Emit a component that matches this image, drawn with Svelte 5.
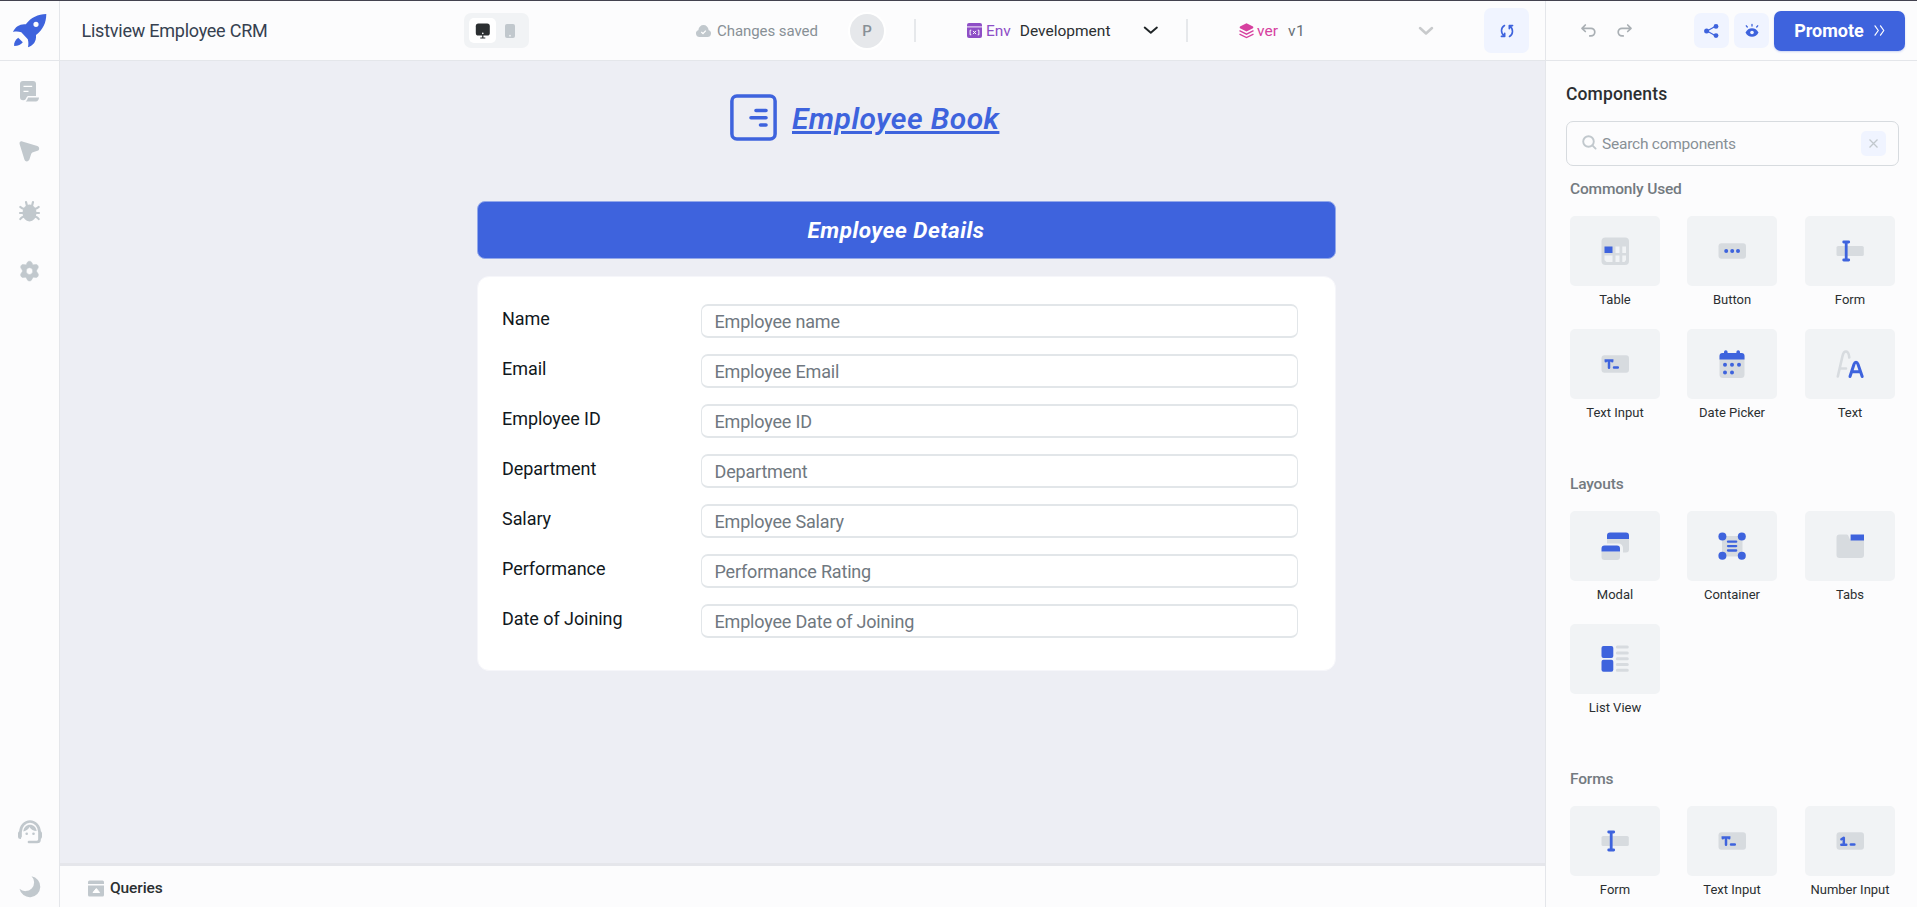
<script>
  const fields = [
    ['Name', 'Employee name'],
    ['Email', 'Employee Email'],
    ['Employee ID', 'Employee ID'],
    ['Department', 'Department'],
    ['Salary', 'Employee Salary'],
    ['Performance', 'Performance Rating'],
    ['Date of Joining', 'Employee Date of Joining']
  ];
  const sections = [
    { title: 'Commonly Used', items: [['Table', 'table'], ['Button', 'button'], ['Form', 'form'], ['Text Input', 'textinput'], ['Date Picker', 'date'], ['Text', 'text']] },
    { title: 'Layouts', items: [['Modal', 'modal'], ['Container', 'container'], ['Tabs', 'tabs'], ['List View', 'list']] },
    { title: 'Forms', items: [['Form', 'form'], ['Text Input', 'textinput'], ['Number Input', 'number']] }
  ];
</script>

{#snippet glyph(kind)}
  <svg width="28" height="28" viewBox="0 0 28 28" fill="none">
    {#if kind === 'table'}
      <rect x=".5" y=".5" width="27.5" height="27.5" rx="4" fill="#d7dbdf" />
      <rect x="3.5" y="9.5" width="8" height="6.5" fill="#3e63dd" />
      <path d="M14.5 9.5h4V16h-4zM21.3 9.5h3.7V16h-3.7zM3.5 18.5h8V25h-6l-2-2zM14.5 18.5h4V25h-4zM21.3 18.5h3.7V23l-1.500 2h-2.200z" fill="#f1f3f5" />
    {:else if kind === 'button'}
      <rect x=".5" y="6.2" width="27.5" height="15.5" rx="3" fill="#d7dbdf" />
      <g fill="#3e63dd"><circle cx="8.2" cy="14" r="2" /><circle cx="14.2" cy="14" r="2" /><circle cx="20" cy="14" r="2" /></g>
    {:else if kind === 'form'}
      <rect x=".5" y="9" width="27.3" height="10" rx="1.6" fill="#d7dbdf" />
      <path d="M7.7 5h5M7.7 23h5M10.2 5v18" stroke="#3e63dd" stroke-width="2.8" stroke-linecap="round" />
    {:else if kind === 'textinput'}
      <rect x=".5" y="5.2" width="27.5" height="17.6" rx="3" fill="#d7dbdf" />
      <path d="M4.8 11.3v-.7h6.400v.7M8 11v6.800M13 17.500h3.800" stroke="#3e63dd" stroke-width="2.500" stroke-linecap="round" />
    {:else if kind === 'number'}
      <rect x=".5" y="5.2" width="27.5" height="17.6" rx="3" fill="#d7dbdf" />
      <path d="M5.4 12.3l2.4-1.500v7M5.300 17.800h5M14.800 17.500h3.600" stroke="#3e63dd" stroke-width="2.500" stroke-linecap="round" stroke-linejoin="round" />
    {:else if kind === 'date'}
      <rect x="1.5" y="3" width="25" height="25" rx="3.5" fill="#d7dbdf" />
      <path d="M1.5 9.5V6a3 3 0 0 1 3-3H6V2a1.8 1.8 0 0 1 3.6 0v1h8.8V2A1.8 1.8 0 0 1 22 2v1h1.5a3 3 0 0 1 3 3v3.5z" fill="#3e63dd" />
      <g fill="#3e63dd"><circle cx="7" cy="14.8" r="2" /><circle cx="14" cy="14.8" r="2" /><circle cx="21" cy="14.8" r="2" /><circle cx="7" cy="22.6" r="2" /><circle cx="14" cy="22.6" r="2" /></g>
    {:else if kind === 'text'}
      <path d="M1.8 26.5L6.5 6C8-.2 12.5-.2 13.3 7.5M4.5 18.5h5.5" stroke="#d7dbdf" stroke-width="2.6" stroke-linecap="round" />
      <path d="M14 26.5l4-12.2c1-2.6 3-2.6 4 0l4.2 12.2M15.8 21.8h8.6" stroke="#3e63dd" stroke-width="3" stroke-linecap="round" />
    {:else if kind === 'modal'}
      <path d="M6 7h22v10.5a3 3 0 0 1-3 3h-3V16a4.5 4.5 0 0 0-4.500-4.500H6z" fill="#d7dbdf" />
      <path d="M6 7V3.500a3 3 0 0 1 3-3h16a3 3 0 0 1 3 3V7z" fill="#3e63dd" />
      <path d="M.5 19.500H19v5.500a3 3 0 0 1-3 3H3.500a3 3 0 0 1-3-3z" fill="#d7dbdf" />
      <path d="M.5 19.500V16.500a3 3 0 0 1 3-3H16a3 3 0 0 1 3 3v3z" fill="#3e63dd" />
    {:else if kind === 'container'}
      <rect x="4" y="4" width="20.500" height="20.500" rx="1" fill="#d7dbdf" />
      <g fill="#3e63dd"><circle cx="4.400" cy="4.500" r="4" /><circle cx="23.800" cy="4.500" r="4" /><circle cx="4.400" cy="23.800" r="4" /><circle cx="23.800" cy="23.800" r="4" /></g>
      <path d="M10 9.700h8.200M10 14.100h8.200M10 18.500h8.200" stroke="#3e63dd" stroke-width="2.300" stroke-linecap="round" />
    {:else if kind === 'tabs'}
      <path d="M.5 5.500a3 3 0 0 1 3-3h7.200c2.400 0 2.300 5.600 4.600 5.600H28V23a3 3 0 0 1-3 3H3.500a3 3 0 0 1-3-3z" fill="#d7dbdf" />
      <path d="M14.600 2.500H28v6H14.600z" fill="#3e63dd" />
    {:else if kind === 'list'}
      <rect x=".5" y="1" width="11.800" height="12" rx="2" fill="#3e63dd" />
      <rect x=".5" y="14.800" width="11.800" height="12" rx="2" fill="#3e63dd" />
      <path d="M16.300 2.100h10M16.300 8h10M16.300 13.800h10M16.300 19.500h10M16.300 25.300h10" stroke="#d7dbdf" stroke-width="3" stroke-linecap="round" />
    {/if}
  </svg>
{/snippet}

<div class="app">
  <header>
    <div class="logo">
      <svg width="34" height="34" viewBox="0 0 34 34" fill="#3e63dd">
        <path fill-rule="evenodd" d="M33.300 0C25 .1 18 3.500 12.800 10.300 7 9.700 2.500 12.500 0 18c3-.7 5.500-.6 8.300.3l6.500 7c.7 2.500.8 5 .2 7.900 5.300-1.600 8.500-5.700 8-12.200C30 15.500 33.200 9 33.300 0zM23 7.700a2.600 2.600 0 1 1 0 5.200 2.600 2.600 0 0 1 0-5.200z" />
        <path d="M5.200 23.800l4.600 4.500c-1.700 2.400-4.500 3.500-8.700 3.700-.3-3.400 1.200-6 4.100-8.200z" />
      </svg>
    </div>
    <div class="title">Listview Employee CRM</div>
    <div class="toggle">
      <span class="on">
        <svg width="16" height="16" viewBox="0 0 16 16"><rect x=".8" y=".6" width="14" height="12" rx="2.600" fill="#2b2f31" /><path d="M7.800 10v4.500M5.300 15h5" stroke="#2b2f31" stroke-width="1.200" /><circle cx="7.800" cy="10.400" r=".8" fill="#fff" /></svg>
      </span>
      <svg class="phone" width="10" height="14" viewBox="0 0 10 14"><rect width="10" height="14" rx="2" fill="#c1c8cd" /><circle cx="5" cy="11.700" r=".9" fill="#f1f3f5" /></svg>
    </div>
    <div class="saved">
      <svg width="15" height="12" viewBox="0 0 15 12"><path d="M3.500 12A3.500 3.500 0 0 1 2.300 5.200C2.800 2 4.800 0 7.500 0s4.700 2 5.200 5.200A3.500 3.500 0 0 1 11.500 12z" fill="#c1c8cd" /><path d="M5.300 7l1.700 1.600 2.800-3" stroke="#fff" stroke-width="1.300" fill="none" /></svg>
      <span>Changes saved</span>
    </div>
    <div class="avatar">P</div>
    <div class="bar"></div>
    <div class="env">
      <svg width="15" height="16" viewBox="0 0 15 16"><path d="M0 3.200V2a2 2 0 0 1 2-2h11a2 2 0 0 1 2 2v1.200z" fill="#8e4ec6" /><path d="M0 3.200h15v1.300H0z" fill="#c9a5e5" /><path d="M0 4.500h15V13a2 2 0 0 1-2 2H2a2 2 0 0 1-2-2z" fill="#8e4ec6" /><path d="M4.300 7.200H3.100v4.600h1.200M10.700 7.200h1.200v4.600h-1.200M6 7.900l3 3.200M9 7.900l-3 3.200" stroke="#fff" fill="none" /></svg>
      <span class="key">Env</span>
      <span class="val">Development</span>
      <svg class="chev" width="16" height="9" viewBox="0 0 16 9" fill="none"><path d="M1.700 1.500l6.100 5.300 6.100-5.300" stroke="#1f2426" stroke-width="1.900" stroke-linecap="round" stroke-linejoin="round" /></svg>
    </div>
    <div class="bar"></div>
    <div class="ver">
      <svg width="15" height="16" viewBox="0 0 15 16"><path d="M7.500.2l6.500 3.400q.8.800 0 1.700L7.500 8.600 1 5.300q-.8-.9 0-1.700z" fill="#d6409f" /><path d="M.5 7.700l7 3.500 7-3.500M.5 11.100l7 3.500 7-3.500" stroke="#d6409f" stroke-width="1.300" fill="none" /></svg>
      <span class="key">ver</span>
      <span class="val">v1</span>
      <svg class="chev" width="16" height="10" viewBox="0 0 16 10" fill="none"><path d="M2 2l6 5.500L14 2" stroke="#c8cacc" stroke-width="2.500" stroke-linecap="round" stroke-linejoin="round" /></svg>
    </div>
    <button class="sync" aria-label="Sync">
      <svg width="14" height="14" viewBox="0 0 14 14" fill="none" stroke="#3e63dd" stroke-width="1.600" stroke-linecap="round" stroke-linejoin="round"><path d="M4.500 1.500C.8 3.500.3 9 4.300 12M1.400 12.400h3.300V9.300M9.500 12.500c3.700-2 4.200-7.500.2-10.500M12.600 1.600H9.300v3.100" /></svg>
    </button>
    <div class="actions">
      <svg class="undo" width="15" height="13" viewBox="0 0 15 13" fill="none" stroke="#a9afb4" stroke-width="1.700" stroke-linecap="round" stroke-linejoin="round"><path d="M4.300 1L1 4.300l3.300 3.200M1.200 4.300H10a3.800 3.800 0 0 1 0 7.600H8.800" /></svg>
      <svg class="redo" width="15" height="13" viewBox="0 0 15 13" fill="none" stroke="#a9afb4" stroke-width="1.700" stroke-linecap="round" stroke-linejoin="round"><path d="M10.700 1L14 4.300l-3.300 3.200M13.800 4.300H5a3.800 3.800 0 0 0 0 7.600h1.200" /></svg>
      <button class="sq" aria-label="Share">
        <svg width="15" height="14" viewBox="0 0 15 14"><path d="M12 2L3 7l9 5" stroke="#3e63dd" stroke-width="1.200" fill="none" /><g fill="#3e63dd"><circle cx="2.600" cy="7" r="2.500" /><circle cx="12" cy="2.400" r="2.400" /><circle cx="12" cy="11.600" r="2.400" /></g></svg>
      </button>
      <button class="sq" aria-label="Preview">
        <svg width="14" height="13" viewBox="0 0 14 13"><path d="M.5 8.500C2 5.600 4.200 4.200 7 4.200s5 1.400 6.500 4.300c-1.500 2.900-3.700 4.300-6.500 4.300S2 11.400.5 8.500z" fill="#3e63dd" /><circle cx="7" cy="8.500" r="1.800" fill="#f0f4ff" /><path d="M7 .4v1.700M1.300 1.800l1 1.200M12.700 1.800l-1 1.200" stroke="#3e63dd" stroke-width="1.300" stroke-linecap="round" /></svg>
      </button>
      <button class="promote">
        <span>Promote</span>
        <svg width="11" height="11" viewBox="0 0 11 11" fill="none" stroke="#fff" stroke-width="1.200" stroke-linecap="round" stroke-linejoin="round"><path d="M1 .8l3.300 4.700L1 10.200M6.500.8l3.300 4.700-3.300 4.700" /></svg>
      </button>
    </div>
  </header>

  <div class="body">
    <nav>
      <svg width="21" height="21" viewBox="0 0 21 21"><path d="M1 3a3 3 0 0 1 3-3h10a3 3 0 0 1 3 3v12H9.500c-1 0-1.500.6-2 1.600-.6 1.500-1.300 2.700-3 2.700A3.300 3.300 0 0 1 1 16z" fill="#c1c8cd" /><path d="M4.500 5.300h8.700M4.500 10.300h5" stroke="#fff" stroke-width="1.300" /><path d="M9 16.600h11c0 2.400-1.200 3.900-3.200 3.900H6.700C8.300 19.500 8.600 18 9 16.600z" fill="#c1c8cd" /></svg>
      <svg width="21" height="21" viewBox="0 0 21 21"><path d="M.6 3C.2 1 1.500-.1 3.300.4l15 4.500c2.500.9 2.500 4 .2 4.900l-4.500 1.400c-1 .4-1.500 1-1.900 2l-1.700 5.400c-.9 2.400-4.300 2.400-5-.1z" fill="#c1c8cd" /></svg>
      <svg width="21" height="21" viewBox="0 0 21 21"><ellipse cx="10.500" cy="12" rx="7" ry="8.500" fill="#c1c8cd" /><path d="M7 1l1 4M14 1l-1 4M1.300 6c1.500 1.500 3 2 5 2M19.700 6c-1.500 1.500-3 2-5 2M1 12h19M1.300 18c1-1.500 3-2.500 5-2.500M19.700 18c-1-1.500-3-2.500-5-2.500" stroke="#c1c8cd" stroke-width="2.200" stroke-linecap="round" fill="none" /></svg>
      <svg width="21" height="21" viewBox="0 0 21 21"><path fill-rule="evenodd" d="M8.400 1.200c.8-1.400 3.400-1.400 4.200 0l1 2c.3.400.7.600 1.200.5l2.200-.3c1.700 0 2.900 2.200 2.100 3.700l-1.300 1.900q-.5.900 0 1.800l1.300 1.900c.9 1.500-.3 3.700-2 3.800l-2.300-.2c-.5 0-.9.200-1.200.6l-1 2c-.8 1.500-3.400 1.500-4.200 0l-1-2c-.3-.4-.7-.6-1.200-.6l-2.200.2c-1.800-.1-3-2.300-2.100-3.800l1.300-1.900q.5-.9 0-1.800L1.900 7.100C1.100 5.600 2.300 3.400 4 3.400l2.200.3c.5.100.9-.1 1.200-.5zM10.500 6.700a3.200 3.400 0 1 0 0 6.800 3.200 3.400 0 0 0 0-6.800z" fill="#c1c8cd" stroke="#c1c8cd" stroke-width=".5" /></svg>
      <svg class="support" width="26" height="24" viewBox="0 0 26 24" fill="none"><path d="M3.500 16.500V12a9.500 10.500 0 0 1 19 0v7.500q0 2.500-2.500 2.500h-8" stroke="#c1c8cd" stroke-width="2.700" stroke-linecap="round" /><path d="M1 13.500q0-2.500 2.500-2.500H4v8h-.5Q1 19 1 16.500zM25 13.500q0-2.500-2.500-2.500H22v8h.5q2.500 0 2.500-2.500z" fill="#c1c8cd" /><path d="M6.300 11.500C6.800 7 9.500 4.700 13 4.700s6.200 2.300 6.700 6.300c-3.200 0-5.700-1.300-7.200-4-1 2.300-3 3.800-6.200 4.500z" fill="#c1c8cd" /><circle cx="9.700" cy="13.700" r="1.300" fill="#c1c8cd" /><circle cx="16.500" cy="13.700" r="1.300" fill="#c1c8cd" /></svg>
      <svg class="moon" width="22" height="22" viewBox="0 0 22 22"><path d="M12.500.3A10.500 10.500 0 1 1 .5 12.700 8.500 8.500 0 0 0 12.500.3z" fill="#c1c8cd" /></svg>
    </nav>

    <main>
      <div class="canvas">
        <div class="brand">
          <svg width="47" height="47" viewBox="0 0 47 47" fill="none" stroke="#3e63dd" stroke-width="3.500" stroke-linecap="round"><rect x="1.900" y="1.900" width="43.200" height="43.200" rx="5" /><path d="M26 16.500h10M21 23.700h15M30.500 31H36" stroke-width="3.600" /></svg>
          <h1>Employee Book</h1>
        </div>
        <div class="banner">Employee Details</div>
        <div class="card">
          {#each fields as [label, hint]}
            <div class="row"><span>{label}</span><div class="input">{hint}</div></div>
          {/each}
        </div>
      </div>
      <footer>
        <svg width="16" height="17" viewBox="0 0 16 17"><path d="M0 4V2a1.500 1.500 0 0 1 1.500-1.500h13A1.500 1.500 0 0 1 16 2v2zM0 5.500h16V15a1.500 1.500 0 0 1-1.500 1.500h-13A1.500 1.500 0 0 1 0 15z" fill="#c1c8cd" /><path d="M5 12.500l3.300-4 3.300 4z" fill="#fff" stroke="#fff" stroke-linejoin="round" /></svg>
        <span>Queries</span>
      </footer>
    </main>

    <aside>
      <h2>Components</h2>
      <div class="search">
        <svg width="15" height="15" viewBox="0 0 15 15" fill="none" stroke="#c1c8cd" stroke-width="1.900" stroke-linecap="round"><circle cx="6.500" cy="6.500" r="5.300" /><path d="M10.600 10.600l3 3" /></svg>
        <span>Search components</span>
        <div class="clear"><svg width="9" height="9" viewBox="0 0 9 9" stroke="#c1c8cd" stroke-width="1.300"><path d="M.5.5l8 8M8.500.5l-8 8" /></svg></div>
      </div>
      {#each sections as s}
        <section>
          <h3>{s.title}</h3>
          <div class="grid">
            {#each s.items as [name, kind]}
              <div class="item">
                <div class="tile">{@render glyph(kind)}</div>
                <span>{name}</span>
              </div>
            {/each}
          </div>
        </section>
      {/each}
    </aside>
  </div>
</div>

<style>
  :global(body) { margin: 0; overflow: hidden; }
  .app { box-sizing: border-box; width: 1917px; height: 907px; display: flex; flex-direction: column; border-top: 1px solid #43424f; background: #fcfcfd; font-family: Roboto, sans-serif; color: #2b2f31; overflow: hidden; white-space: nowrap; }
  .app :global(*) { box-sizing: border-box; }
  svg { display: block; flex: none; overflow: visible; }
  button { border: 0; padding: 0; font: inherit; display: flex; align-items: center; justify-content: center; flex: none; }
  h1, h2, h3 { margin: 0; }
  header { height: 60px; flex: none; display: flex; align-items: center; border-bottom: 1px solid #e4e6ea; }
  header > * { flex: none; }
  .logo { width: 60px; height: 59px; border-right: 1px solid #e4e6ea; display: flex; align-items: center; padding-left: 13px; }
  .title { width: 404px; padding-left: 21.500px; font-size: 18px; color: #364150; letter-spacing: -.24px; }
  .toggle { width: 65px; height: 35px; border-radius: 7px; background: #f1f3f5; display: flex; align-items: center; padding-left: 5px; }
  .on { width: 27px; height: 25px; border-radius: 5px; background: #fff; display: flex; align-items: center; justify-content: center; }
  .phone { margin-left: 9px; }
  .saved { width: 317px; padding-left: 167px; display: flex; align-items: center; gap: 6px; font-size: 15px; color: #889096; letter-spacing: -.06px; }
  .avatar { width: 38px; height: 38px; margin-left: 2px; border: 2px solid #fff; border-radius: 50%; background: #e6e8eb; display: flex; align-items: center; justify-content: center; font-size: 15px; font-weight: 500; color: #889096; }
  .bar { width: 2px; height: 23px; margin-left: 28px; background: #e6e8eb; }
  .env { width: 243px; margin-right: 27px; padding-left: 51px; display: flex; align-items: center; font-size: 15.500px; }
  .env .key { width: 38px; padding-left: 4px; color: #8e4ec6; }
  .env .val { width: 124px; }
  .env + .bar { margin-left: 0; margin-right: 28px; }
  .ver { width: 268px; padding-left: 23px; display: flex; align-items: center; font-size: 15.500px; }
  .ver .key { width: 34px; padding-left: 3px; color: #d6409f; }
  .ver .val { width: 130px; color: #687076; letter-spacing: .5px; }
  .sync { width: 45px; height: 45px; border-radius: 7px; background: #f0f4ff; }
  .actions { width: 372px; height: 59px; margin-left: 16px; border-left: 1px solid #e4e6ea; display: flex; align-items: center; padding-left: 35px; }
  .redo { margin: 0 62px 0 21px; }
  .sq { width: 35px; height: 35px; margin-right: 5px; border-radius: 7px; background: #f0f4ff; }
  .promote { width: 131px; height: 40px; border-radius: 7px; background: #3e63dd; color: #fff; box-shadow: 0 1px 2px #3e63dd40; font-size: 18px; font-weight: 700; gap: 10px; }
  .body { flex: 1; min-height: 0; display: flex; }
  nav { width: 60px; flex: none; border-right: 1px solid #e4e6ea; display: flex; flex-direction: column; align-items: center; gap: 39px; padding-top: 20px; }
  .support { margin-top: auto; }
  .moon { margin: -7px 0 9px; }
  main { width: 1485px; flex: none; display: flex; flex-direction: column; }
  .canvas { flex: 1; background: #edeef4; padding: 33px 209px 0 417px; display: flex; flex-direction: column; }
  .brand { display: flex; align-items: center; gap: 15px; padding-left: 253px; height: 47px; }
  h1 { padding-top: 2px; font-size: 30px; font-style: italic; font-weight: 600; letter-spacing: .45px; color: #3e63dd; text-decoration: underline; text-decoration-thickness: 3px; text-underline-offset: 2px; }
  .banner { height: 58px; margin-top: 60px; border: 1px solid #93a8ea; border-radius: 8px; background: #3e63dd; color: #fff; display: flex; align-items: center; justify-content: center; padding-right: 21px; font-size: 22.500px; font-weight: 700; font-style: italic; letter-spacing: .48px; }
  .card { height: 395px; margin-top: 17px; border: 1px solid #f6f6fa; border-radius: 12px; background: #fff; padding: 27px 37px 0 24px; }
  .row { display: flex; height: 50px; font-size: 18px; color: #11181c; }
  .row span { width: 199px; line-height: 30px; letter-spacing: -.06px; }
  .input { width: 597px; height: 34px; border: solid #e2e6e9; border-width: 2px 1px; border-radius: 7px; padding-left: 12.500px; line-height: 32px; color: #707880; letter-spacing: -.18px; }
  footer { height: 44px; border-top: 3px solid #e5e6eb; display: flex; align-items: center; gap: 6px; padding: 4px 0 0 28px; font-size: 15.500px; font-weight: 500; }
  footer span { margin-top: -2px; letter-spacing: -.1px; }
  aside { flex: 1; border-left: 1px solid #e4e6ea; padding: 20px 18px 0 20px; }
  h2 { font-size: 17.500px; line-height: 26px; font-weight: 500; letter-spacing: .12px; }
  .search { height: 45px; margin-top: 14px; border: 1px solid #d7dbdf; border-radius: 7px; display: flex; align-items: center; padding: 0 12px 0 15px; font-size: 15.500px; color: #889096; letter-spacing: -.24px; }
  .search > svg { margin: -3px 5px 0 0; }
  .clear { width: 25px; height: 25px; margin-left: auto; border-radius: 5px; background: #f0f4ff; display: flex; align-items: center; justify-content: center; }
  section { padding: 12px 4px 0; height: 295px; }
  h3 { font-size: 15.500px; line-height: 22px; font-weight: 500; letter-spacing: -.17px; color: #737a80; }
  .grid { display: grid; grid-template-columns: 117px 118px 90px; margin-top: 16px; width: 325px; }
  .item { width: 90px; height: 113px; text-align: center; }
  .item span { display: block; font-size: 13px; line-height: 18px; margin-top: 5px; }
  .tile { height: 70px; border-radius: 5px; background: #f1f3f5; display: flex; align-items: center; justify-content: center; }
</style>
